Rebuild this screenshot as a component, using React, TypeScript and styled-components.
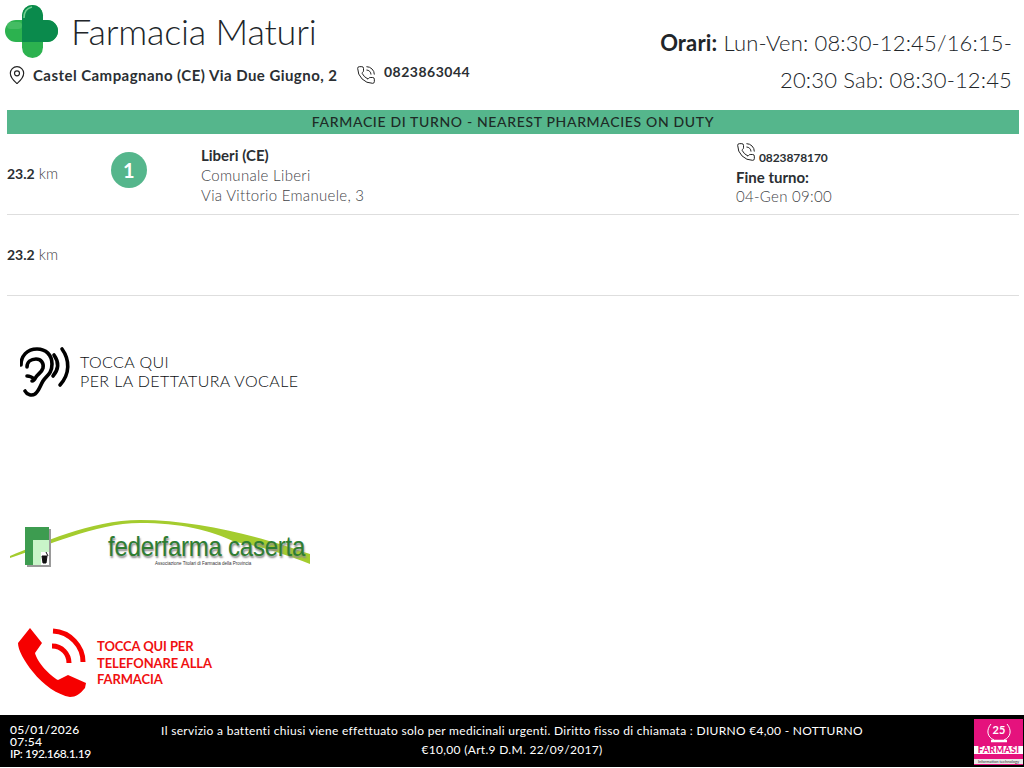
import React from 'react';
import styled, { createGlobalStyle } from 'styled-components';
import { MapPin, PhoneCall } from 'lucide-react';

const GlobalStyle = createGlobalStyle`
  html, body {
    margin: 0;
    padding: 0;
    background: #fff;
    font-family: 'Lato', 'Open Sans', sans-serif;
    color: #212529;
  }
`;

const Page = styled.div`
  width: 1024px;
  height: 767px;
  display: flex;
  flex-direction: column;
  overflow: hidden;
`;

const Header = styled.header`
  height: 110px;
  padding: 5px 12px 0 5px;
  box-sizing: border-box;
  display: flex;
  justify-content: space-between;
`;

const Brand = styled.div`
  display: flex;
  flex-direction: column;
  gap: 6px;
`;

const BrandTop = styled.div`
  display: flex;
  align-items: center;
  gap: 12px;
  height: 54px;
`;

const BrandName = styled.h1`
  margin: 0 0 2px;
  font-size: 36px;
  font-weight: 300;
  letter-spacing: -0.2px;
  color: #212529;
`;

const ContactRow = styled.div`
  display: flex;
  align-items: center;
  padding-left: 2px;
  font-size: 15px;
  font-weight: 700;
  color: #2b2f33;
`;

const Address = styled.span`
  margin-left: 6px;
  width: 323px;
  letter-spacing: 0.45px;
`;

const PhoneNumber = styled.span`
  margin-left: 8px;
  position: relative;
  top: -4px;
  font-size: 14px;
  letter-spacing: 0.5px;
`;

const Hours = styled.div`
  width: 370px;
  margin-top: 19px;
  text-align: right;
  font-size: 22px;
  line-height: 37px;
  letter-spacing: 0.15px;
  font-weight: 300;
  color: #212529;
  b { font-weight: 700; }
`;

const TurnBar = styled.div`
  margin: 0 5px 0 7px;
  height: 24px;
  line-height: 24px;
  background: #55b68c;
  text-align: center;
  font-size: 14px;
  font-weight: 500;
  letter-spacing: 0.65px;
  color: #1e2b26;
`;

const Row = styled.div`
  margin: 0 5px 0 7px;
  height: 80px;
  border-bottom: 1px solid #dedede;
  display: grid;
  grid-template-columns: 104px 90px 535px 1fr;
  align-items: center;
  font-size: 15px;
  letter-spacing: 0.3px;
  color: #3f4347;
  font-weight: 300;
`;

const Distance = styled.div`
  margin-top: -2px;
  letter-spacing: 0;
  b { font-weight: 700; font-size: 14px; color: #2b2f33; }
`;

const Badge = styled.div`
  width: 36px;
  height: 36px;
  border-radius: 50%;
  background: #55b68c;
  color: #fff;
  font-size: 20px;
  font-weight: 700;
  display: flex;
  align-items: center;
  justify-content: center;
  margin-top: -9px;
`;

const PlaceInfo = styled.div`
  line-height: 20px;
  margin-top: 2px;
`;

const DarkLine = styled.div`
  font-weight: 700;
  color: #2b2f33;
  letter-spacing: 0;
`;

const TurnInfo = styled.div`
  line-height: 19.5px;
  margin-top: 2px;
`;

const TurnPhone = styled.div`
  display: flex;
  align-items: flex-end;
  gap: 3px;
  font-size: 12px;
  font-weight: 700;
  letter-spacing: -0.1px;
  color: #2b2f33;
  height: 24px;
  svg {
    align-self: flex-start;
    margin-top: -2px;
  }
`;

const ActionGap = styled.div`
  height: 50px;
`;

const VoiceAction = styled.div`
  height: 52px;
  display: flex;
  align-items: center;
  padding-left: 20px;
  gap: 10px;
  font-size: 16px;
  line-height: 19px;
  font-weight: 300;
  letter-spacing: 0.4px;
  color: #0c0f12;
`;

const VoiceText = styled.div`
  margin-top: -2px;
`;

const LogoWrap = styled.div`
  margin-top: 120px;
  height: 54px;
  margin-left: 10px;
  width: 300px;
  position: relative;
`;

const FedText = styled.div`
  position: absolute;
  left: 98px;
  top: 13px;
  font-family: 'Liberation Sans', sans-serif;
  font-size: 28px;
  font-weight: 400;
  letter-spacing: -0.25px;
  color: #2e7d32;
  transform: scaleX(0.855);
  transform-origin: left;
  text-shadow: 1px 2px 2px #8a8a8a;
  white-space: nowrap;
`;

const FedSub = styled.div`
  position: absolute;
  left: 145px;
  top: 43px;
  font-family: 'Liberation Sans', sans-serif;
  font-size: 4.5px;
  color: #333;
  white-space: nowrap;
`;

const CallAction = styled.div`
  margin-top: 56px;
  padding-left: 18px;
  display: flex;
  align-items: center;
  gap: 11px;
  height: 70px;
`;

const CallText = styled.div`
  font-size: 13px;
  line-height: 16.5px;
  font-weight: 700;
  letter-spacing: -0.1px;
  color: #f01010;
`;

const Footer = styled.footer`
  margin-top: auto;
  height: 52px;
  background: #000;
  color: #fff;
  display: grid;
  grid-template-columns: 150px 1fr 52px;
  align-items: center;
  flex: none;
`;

const FooterInfo = styled.div`
  padding-left: 10px;
  font-size: 12px;
  line-height: 12px;
  font-weight: 500;
  letter-spacing: 0.3px;
  margin-top: 1px;
`;

const IpLine = styled.div`
  letter-spacing: -0.45px;
`;

const FooterNote = styled.div`
  font-size: 12px;
  line-height: 19px;
  letter-spacing: 0.3px;
  text-align: center;
  width: 706px;
  margin-left: 9px;
  margin-top: -3px;
`;

const BrandBox = styled.div`
  width: 49px;
  height: 46px;
  background: #e5127d;
  margin-top: 2px;
  margin-left: 2px;
  padding-top: 2px;
  box-sizing: border-box;
  display: flex;
  flex-direction: column;
  align-items: center;
  overflow: hidden;
`;

const BrandBoxName = styled.div`
  width: 100%;
  text-align: center;
  font-size: 9px;
  font-weight: 900;
  background: #fff;
  color: #e5127d;
  line-height: 8px;
  height: 8px;
  letter-spacing: 0.3px;
`;

const BrandBoxSub = styled.div`
  width: 100%;
  text-align: center;
  background: #e8e8e8;
  color: #333;
  font-size: 4px;
  line-height: 5px;
  margin-top: 5px;
  white-space: nowrap;
`;

const CrossLogo = () => (
  <svg width="54" height="54" viewBox="0 0 54 54">
    <rect x="0" y="15" width="53" height="22" rx="11" fill="#2cb24f" />
    <rect x="17" y="0" width="21" height="53" rx="10.5" fill="#2cb24f" />
    <rect x="2" y="17" width="15" height="7" rx="3.5" fill="#5cc578" opacity="0.5" />
    <path d="M17 37 V10.5 A10.5 10.5 0 0 1 38 10.5 V15 H42 A11 11 0 0 1 42 37 Z" fill="#0a8a4c" />
    <path d="M19 13 C19 7 22 3 27 2" fill="none" stroke="#6fd08e" strokeWidth="1.6" />
  </svg>
);

const EarIcon = () => (
  <svg width="50" height="52" viewBox="5 3 50 52" fill="none" stroke="#000" strokeLinecap="round" strokeWidth="3.6">
    <path d="M10 48 C12 52 17 53 20 51 C24 48 25 43 28 38 C31 33 37 31 37 21 C37 12 31 6 22 6 C12 6 6 13 6 22" />
    <path d="M12 24 C12 19 16 16 21 16 C26 16 29 20 28 25 C27 29 23 31 21 34 C20 36 19 38 17 38" />
    <path d="M12 33 C15 33 17 34 19 36" />
    <path d="M39 12 C44 19 44 26 38 33" />
    <path d="M47 6 C55 17 55 31 45 42" />
  </svg>
);

const FederfarmaArt = () => (
  <svg width="300" height="54" viewBox="0 0 300 54" style={{ position: 'absolute', left: 0, top: 0 }}>
    <path d="M0 38 C30 26 80 2 130 2 C190 2 255 20 300 36 L300 46 C270 34 240 26 225 24 C200 12 170 5 130 5 C85 5 35 29 0 40 Z" fill="#a4cc2e" />
    <rect x="17" y="11" width="24" height="38" fill="#9a9a9a" />
    <rect x="15" y="9" width="24" height="38" fill="#3d9c50" />
    <rect x="23" y="22" width="16" height="25" fill="#c9f5c9" />
    <rect x="31" y="34" width="8" height="13" fill="#fff" />
    <path d="M32 38 H37 L36 45 H33 Z M36 34 L38 38" fill="#111" stroke="#111" />
  </svg>
);

const RedPhone = () => (
  <svg width="68" height="70" viewBox="0 0 68 70">
    <path
      d="M12 0 L24 15 L17 25 C19 34 32 48 40 52 L50 47 L68 55 L67 60 C62 66 58 69 52 69 C40 67 25 57 15 44 C6 33 0 22 0 15 Z"
      fill="#f60000"
    />
    <path d="M35 3 C52 4 65 18 65 34" fill="none" stroke="#f60000" strokeWidth="5" />
    <path d="M34 18 C44 18 51 26 51 35" fill="none" stroke="#f60000" strokeWidth="5" />
  </svg>
);

const AnniversaryMark = () => (
  <svg width="28" height="25" viewBox="0 0 28 25" fill="none" stroke="#fff" strokeWidth="1">
    <path d="M6 3 C1 9 2 16 9 19 M22 3 C27 9 26 16 19 19" />
    <path d="M6 20 H22" strokeWidth="2.5" />
    <text x="14" y="13" textAnchor="middle" fill="#fff" stroke="none" fontSize="11" fontWeight="700">25</text>
  </svg>
);

export default function App() {
  return (
    <Page>
      <GlobalStyle />
      <Header>
        <Brand>
          <BrandTop>
            <CrossLogo />
            <BrandName>Farmacia Maturi</BrandName>
          </BrandTop>
          <ContactRow>
            <MapPin size={20} strokeWidth={1.4} color="#222" />
            <Address>Castel Campagnano (CE) Via Due Giugno, 2</Address>
            <PhoneCall size={20} strokeWidth={1.2} color="#222" />
            <PhoneNumber>0823863044</PhoneNumber>
          </ContactRow>
        </Brand>
        <Hours>
          <b>Orari:</b> Lun-Ven: 08:30-12:45/16:15-20:30 Sab: 08:30-12:45
        </Hours>
      </Header>

      <TurnBar>FARMACIE DI TURNO - NEAREST PHARMACIES ON DUTY</TurnBar>

      <Row>
        <Distance><b>23.2</b> km</Distance>
        <Badge>1</Badge>
        <PlaceInfo>
          <DarkLine>Liberi (CE)</DarkLine>
          <div>Comunale Liberi</div>
          <div>Via Vittorio Emanuele, 3</div>
        </PlaceInfo>
        <TurnInfo>
          <TurnPhone>
            <PhoneCall size={20} strokeWidth={1.2} color="#222" />
            0823878170
          </TurnPhone>
          <DarkLine>Fine turno:</DarkLine>
          <div>04-Gen 09:00</div>
        </TurnInfo>
      </Row>
      <Row>
        <Distance><b>23.2</b> km</Distance>
      </Row>

      <ActionGap />
      <VoiceAction>
        <EarIcon />
        <VoiceText>
          TOCCA QUI<br />PER LA DETTATURA VOCALE
        </VoiceText>
      </VoiceAction>

      <LogoWrap>
        <FederfarmaArt />
        <FedText>federfarma caserta</FedText>
        <FedSub>Associazione Titolari di Farmacia della Provincia</FedSub>
      </LogoWrap>

      <CallAction>
        <RedPhone />
        <CallText>
          TOCCA QUI PER<br />TELEFONARE ALLA<br />FARMACIA
        </CallText>
      </CallAction>

      <Footer>
        <FooterInfo>
          05/01/2026<br />07:54<IpLine>IP: 192.168.1.19</IpLine>
        </FooterInfo>
        <FooterNote>
          Il servizio a battenti chiusi viene effettuato solo per medicinali urgenti. Diritto fisso di chiamata : DIURNO €4,00 - NOTTURNO €10,00 (Art.9 D.M. 22/09/2017)
        </FooterNote>
        <BrandBox>
          <AnniversaryMark />
          <BrandBoxName>FARMASI</BrandBoxName>
          <BrandBoxSub>Information technology</BrandBoxSub>
        </BrandBox>
      </Footer>
    </Page>
  );
}
